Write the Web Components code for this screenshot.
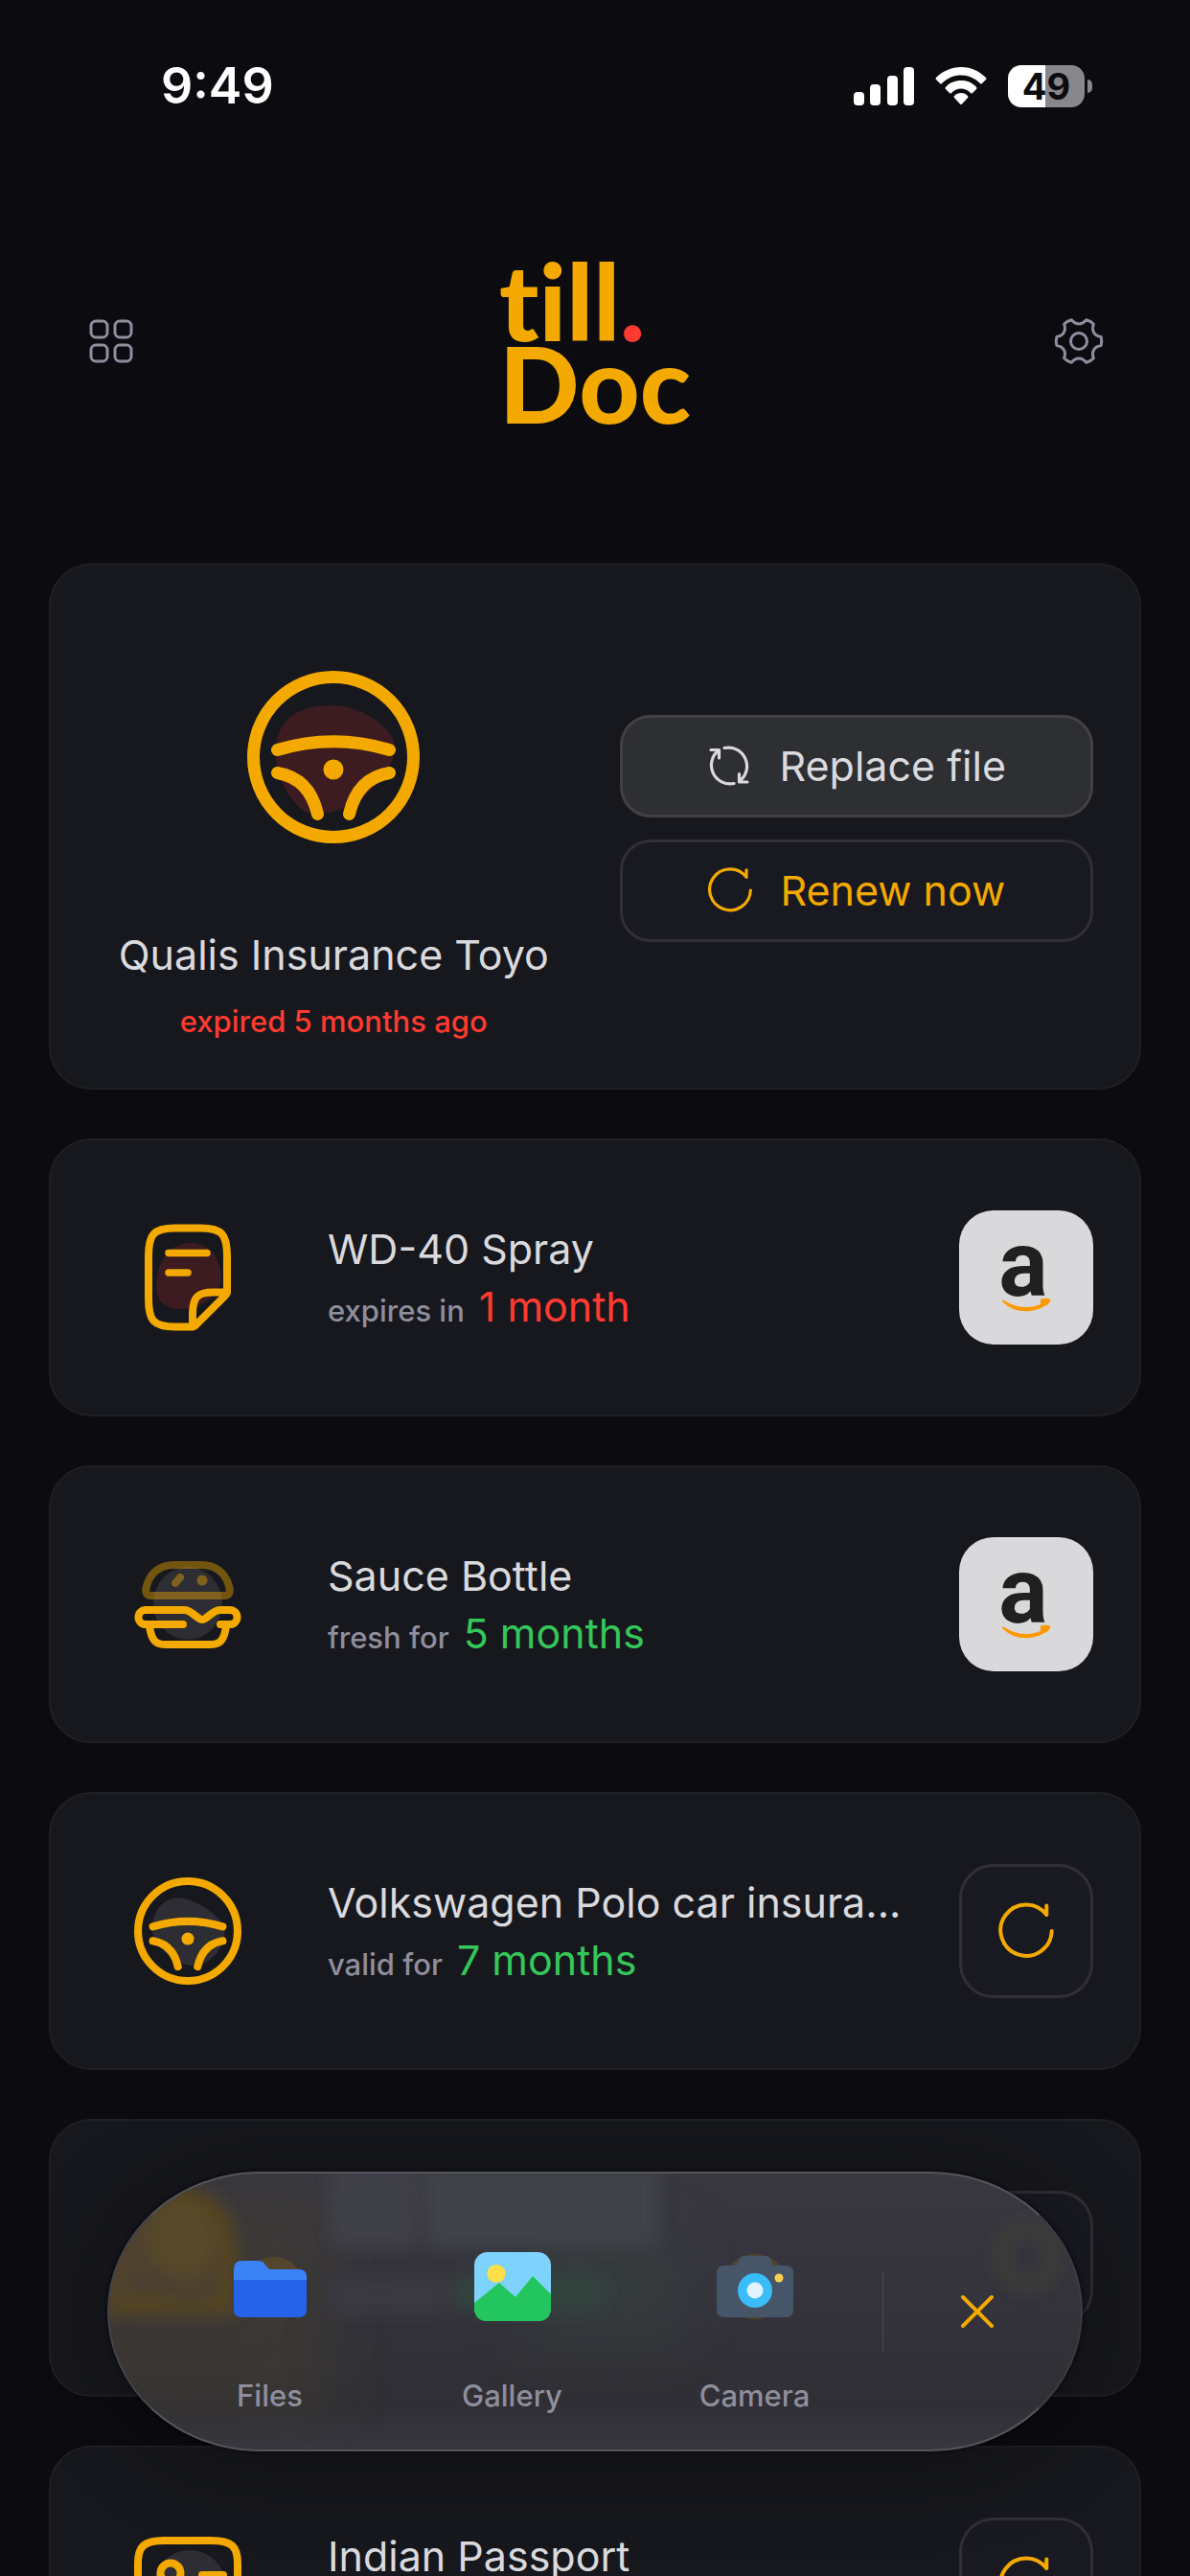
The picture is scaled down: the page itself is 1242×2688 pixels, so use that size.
<!DOCTYPE html>
<html lang="en">
<head>
<meta charset="utf-8">
<meta name="viewport" content="width=device-width, initial-scale=1">
<title>till.Doc</title>
<style>
  :root {
    --bg: #0c0b10;
    --card: #17181d;
    --card-line: #1f2025;
    --amber: #f3a900;
    --red: #ff3a30;
    --green: #34c759;
    --text: #dadade;
    --muted: #8f8e9d;
  }
  body {
    margin: 0;
    background: var(--bg);
    color: var(--text);
    font-family: Inter, "Liberation Sans", sans-serif;
  }
</style>
</head>
<body>

<till-screen>
  <status-bar slot="status" time="9:49" battery="49"></status-bar>
  <app-header slot="header"></app-header>

  <feature-card heading="Qualis Insurance Toyo" note="expired 5 months ago">
    <doc-icon slot="icon" name="wheel" tone="red" size="180"></doc-icon>
    <pill-button slot="actions" icon="replace" filled>Replace file</pill-button>
    <pill-button slot="actions" icon="renew">Renew now</pill-button>
  </feature-card>

  <doc-card heading="WD-40 Spray" label="expires in" value="1 month" tone="red" action="shop">
    <doc-icon slot="icon" name="note" tone="red"></doc-icon>
  </doc-card>
  <doc-card heading="Sauce Bottle" label="fresh for" value="5 months" action="shop">
    <doc-icon slot="icon" name="burger"></doc-icon>
  </doc-card>
  <doc-card heading="Volkswagen Polo car insura..." label="valid for" value="7 months" action="renew">
    <doc-icon slot="icon" name="wheel"></doc-icon>
  </doc-card>
  <doc-card action="renew"></doc-card>
  <doc-card heading="Indian Passport" action="renew">
    <doc-icon slot="icon" name="passport"></doc-icon>
  </doc-card>

  <add-dock slot="dock">
    <dock-item icon="files">Files</dock-item>
    <dock-item icon="gallery">Gallery</dock-item>
    <dock-item icon="camera">Camera</dock-item>
  </add-dock>
</till-screen>

<script>
(function() {

  // six lobes round the hub, flat on top, with a soft valley between them
  function cog(outer, inner) {
    const at = (r, deg) => {
      const a = deg * Math.PI / 180;
      return (r * Math.cos(a)).toFixed(1) + ' ' + (r * Math.sin(a)).toFixed(1);
    };
    let d = 'M' + at(outer, -11);
    for (let deg = 0; deg < 360; deg += 60) {
      d += `Q${ at(outer + 1, deg) } ${ at(outer, deg + 11) }`;
      d += `C${ at(inner, deg + 19) } ${ at(inner, deg + 41) } ${ at(outer, deg + 49) }`;
    }
    return d + 'Z';
  }

  const BLOBS = {
    wheelred: 'M-60-10C-58-40-35-54-3-54C30-54 64-30 64-10C64 10 42 33 28 45C12 58-22 62-32 55C-50 42-62 12-60-10Z',
    wheel: 'M-60-8C-58-35-40-56-16-56C18-54 62-20 62 0C62 28 38 58 8 58C-22 58-62 22-60-8Z'
  };

  const ICONS = {
    wheel: tone => `
      <svg viewBox="-90 -90 180 180" stroke-width="13">
        <path class="blob" d="${ BLOBS['wheel' + tone] || BLOBS.wheel }"/>
        <circle r="83.5"/>
        <path d="M-58.5-7.5Q0-25 58.5-7.5M-58.5 16.5Q-25 22-16.5 59.5M58.5 16.5Q25 22 16.5 59.5"/>
        <circle class="dot" cy="13" r="10.5"/>
      </svg>`,
    note: () => `
      <svg viewBox="-56 -56 112 112" stroke-width="8">
        <path class="blob" d="M-33 8C-32-18-18-36 3-36C24-36 35-18 35 2C34 20 12 33-8 33C-26 32-33 24-33 8Z"/>
        <path d="M5 51.5H-13C-36 51.5-41 45-41 22V-22C-41-45-36-51.5-13-51.5H13C36-51.5 41-45 41-22V14Q41 17 38 20L10 48Q7 51.5 5 51.5V38C5 20 11 15.500 26 15.500H41"/>
        <path d="M-20-25.500H20M-20-5H0" stroke-width="7.500"/>
      </svg>`,
    burger: () => `
      <svg viewBox="-56 -56 112 112" stroke-width="8">
        <ellipse class="blob" cy="-1" rx="36" ry="38"/>
        <g opacity=".42">
          <path d="M-38-9H38Q45-9 43.500-17C40-32 30-41 14-41H-14C-30-41-40-32-43.500-17Q-45-9-38-9Z"/>
          <path d="M-13-22L-8-28"/>
          <circle class="dot" cx="15" cy="-25" r="5.500"/>
        </g>
        <path d="M-5 21H-44A7.500 7.500 0 0 1-44 6H-4Q0 6 4 9L12 15Q15 17 18 15L26 9Q30 6 34 6H44A7.500 7.500 0 0 1 44 21H34M-40 23C-38 37-34 42-24 42H24C34 42 38 37 40 23"/>
      </svg>`,
    passport: () => `
      <svg viewBox="-56 -56 112 112" stroke-width="8">
        <circle class="blob" cx="2" cy="2" r="38"/>
        <path d="M-24-46H24C46-46 52-40 52-22V22C52 40 46 46 24 46H-24C-46 46-52 40-52 22V-22C-52-40-46-46-24-46Z"/>
        <circle cx="-18" cy="-12" r="10.500"/>
        <path d="M15-10H37M-36 26C-34 10-2 10 0 26M15 10H37"/>
      </svg>`,
    renew: () => `
      <svg viewBox="-30 -30 60 60" stroke-width="4">
        <path d="M26.700 0A26.700 26.700 0 1 1 21.300-17V-26.500"/>
      </svg>`,
    replace: () => `
      <svg viewBox="0 0 48 48" stroke-width="3.200">
        <path d="M19 5.500A19.500 19.500 0 0 1 35 40M43 41H34.500V32.500M29 42.500A19.500 19.500 0 0 1 13 8M5 7.500H13.500V16"/>
      </svg>`,
    grid: () => `
      <svg viewBox="-28 -28 56 56" stroke-width="3">
        <rect x="-21" y="-21" width="17" height="17" rx="5"/>
        <rect x="4" y="-21" width="17" height="17" rx="5"/>
        <rect x="-21" y="4" width="17" height="17" rx="5"/>
        <rect x="4" y="4" width="17" height="17" rx="5"/>
      </svg>`,
    gear: () => `
      <svg viewBox="-28 -28 56 56" stroke-width="3">
        <path d="${ cog(23.5, 17) }"/>
        <circle r="8.500"/>
      </svg>`,
    close: () => `
      <svg viewBox="-28 -28 56 56" stroke-width="4">
        <path d="M-15-15L15 15M15-15L-15 15"/>
      </svg>`,
    files: () => `
      <svg viewBox="0 0 88 80" stroke="none">
        <circle cx="48" cy="40" r="31" fill="#54452f"/>
        <path fill="#3b82f6" d="M6 22Q6 13 15 13H31Q35 13 37 15L43 22H74Q82 22 82 30V50H6Z"/>
        <path fill="#2563eb" d="M6 33H82V64Q82 72 74 72H14Q6 72 6 64Z"/>
      </svg>`,
    gallery: () => `
      <svg viewBox="0 0 88 80" stroke="none">
        <rect x="4" y="4" width="80" height="72" rx="14" fill="#7dd3fc"/>
        <circle cx="27" cy="26.500" r="9.500" fill="#fde047"/>
        <path fill="#22c55e" d="M4 57L30 36L47 51L65 29L84 48V62Q84 76 70 76H18Q4 76 4 62Z"/>
      </svg>`,
    camera: () => `
      <svg viewBox="0 0 88 80" stroke="none">
        <circle cx="44" cy="40" r="34" fill="#51432f"/>
        <path fill="#475569" d="M4 26Q4 18 12 18H25L29 10Q30 8 33 8H55Q58 8 59 10L63 18H76Q84 18 84 26V64Q84 72 76 72H12Q4 72 4 64Z"/>
        <circle cx="44" cy="44" r="18" fill="#38bdf8"/>
        <circle cx="44" cy="44" r="8.500" fill="#e0f2fe"/>
        <circle cx="69" cy="31" r="4.500" fill="#fcd34d"/>
      </svg>`,
    amazon: () => `
      <svg viewBox="0 0 140 140" stroke="none">
        <text x="67" y="89" text-anchor="middle" font-family="Roboto, sans-serif" font-weight="700" font-size="96" fill="#221f1f">a</text>
        <path fill="#ff9900" d="M46 93C58 102 73 103 85 98V92.500Q92 91 95.500 93Q95 97 91 99C78 107 59 109 45 95Z"/>
      </svg>`
  };

  class Base extends HTMLElement {
    constructor() {
      super();
      this.attachShadow({ mode: 'open' });
    }
    connectedCallback() {
      this.shadowRoot.innerHTML = `
        <style>
          *, :host { box-sizing: border-box; }
          svg { display: block; overflow: visible; fill: none; stroke-linecap: round; stroke-linejoin: round; }
          button { margin: 0; padding: 0; border: 0; background: none; color: inherit; font: inherit; }
          ${ this.styles() }
        </style>
        ${ this.markup() }`;
    }
    attr(name) {
      return this.getAttribute(name) || '';
    }
  }

  customElements.define('till-screen', class extends Base {
    styles() {
      return `
        :host { display: block; position: relative; height: 100vh; overflow: hidden; }
        main { display: flex; flex-direction: column; gap: 51px; padding: 0 51px; }
      `;
    }
    markup() {
      return `
        <slot name="status"></slot>
        <slot name="header"></slot>
        <main><slot></slot></main>
        <slot name="dock"></slot>`;
    }
  });

  customElements.define('status-bar', class extends Base {
    styles() {
      return `
        :host {
          display: flex;
          justify-content: space-between;
          align-items: center;
          padding: 62px 102px 0 168px;
          height: 118px;
          color: #fff;
        }
        time { font-size: 52px; font-weight: 600; line-height: 56px; }
        .signs { display: flex; align-items: center; gap: 22px; }
        .signs svg { fill: #fff; }
        .battery { display: flex; align-items: center; gap: 3px; }
        .level {
          width: 80px;
          border-radius: 14px;
          background: linear-gradient(90deg, #fff 49%, #88878b 49%);
          color: var(--bg);
          font-size: 38px;
          font-weight: 700;
          line-height: 44px;
          text-align: center;
        }
        .nub { width: 5px; height: 14px; border-radius: 0 5px 5px 0; background: #88878b; }
      `;
    }
    markup() {
      return `
        <time>${ this.attr('time') }</time>
        <div class="signs">
          <svg width="63" height="40" viewBox="0 0 63 40">
            <rect y="26" width="11" height="14" rx="4"/>
            <rect x="17" y="18" width="11" height="22" rx="4"/>
            <rect x="35" y="9" width="11" height="31" rx="4"/>
            <rect x="52" width="11" height="40" rx="4"/>
          </svg>
          <svg width="54" height="40" viewBox="0 0 54 40">
            <path d="M27 0C37 0 46 4 53 11Q54 12 53 13L49 17Q48 18 47 17C41 11 34 8.500 27 8.500S13 11 7 17Q6 18 5 17L1 13Q0 12 1 11C8 4 17 0 27 0Z"/>
            <path d="M27 14C33 14 39 16 43 21Q44 22 43 23L39 27Q38 28 37 27C34 24 31 22.500 27 22.500S20 24 17 27Q16 28 15 27L11 23Q10 22 11 21C15 16 21 14 27 14Z"/>
            <path d="M27 27C30 27 32 28 34 30Q35 31 34 32L28 38.500Q27 39.500 26 38.500L20 32Q19 31 20 30C22 28 24 27 27 27Z"/>
          </svg>
          <div class="battery">
            <span class="level">${ this.attr('battery') }</span>
            <span class="nub"></span>
          </div>
        </div>`;
    }
  });

  customElements.define('app-header', class extends Base {
    styles() {
      return `
        :host {
          display: flex;
          justify-content: space-between;
          align-items: center;
          padding: 152px 88px 146px;
        }
        svg { width: 56px; height: 56px; stroke: var(--muted); }
        h1 {
          margin: 0;
          color: var(--amber);
          font: 900 110px/86px Lato, sans-serif;
          font-variant-ligatures: none;
        }
        h1 span { display: block; }
        h1 i { font-style: normal; color: var(--red); }
      `;
    }
    markup() {
      return `
        <button aria-label="Categories">${ ICONS.grid() }</button>
        <h1><span>till<i>.</i></span><span>Doc</span></h1>
        <button aria-label="Settings">${ ICONS.gear() }</button>`;
    }
  });

  customElements.define('doc-icon', class extends Base {
    styles() {
      const size = this.attr('size') || 112;
      const blob = this.attr('tone') === 'red' ? '#3c1c20' : '#2d2d33';
      return `
        :host { display: block; width: ${ size }px; height: ${ size }px; }
        svg { width: 100%; height: 100%; stroke: var(--amber); }
        .blob { fill: ${ blob }; stroke: none; }
        .dot { fill: var(--amber); stroke: none; }
      `;
    }
    markup() {
      return ICONS[this.attr('name')](this.attr('tone'));
    }
  });

  customElements.define('pill-button', class extends Base {
    styles() {
      return `
        :host { display: block; color: var(--amber); }
        :host([filled]) { color: var(--text); }
        button {
          display: flex;
          justify-content: center;
          align-items: center;
          gap: 28px;
          width: 100%;
          height: 107px;
          border: 3px solid #302f37;
          border-radius: 32px;
          background: #191922;
          font-size: 43px;
        }
        :host([filled]) button { border-color: #414146; background: #2e2f33; }
        svg { width: 48px; height: 48px; stroke: currentColor; }
      `;
    }
    markup() {
      return `<button>${ ICONS[this.attr('icon')]() }<slot></slot></button>`;
    }
  });

  const CARD = `
    border: 2px solid var(--card-line);
    border-radius: 44px;
    background: var(--card);
  `;

  customElements.define('feature-card', class extends Base {
    styles() {
      return `
        :host {
          display: grid;
          grid-template-columns: 1fr 1fr;
          gap: 51px;
          align-items: center;
          padding: 48px 48px 45px;
          ${ CARD }
        }
        .doc { display: flex; flex-direction: column; align-items: center; }
        .art { padding: 62px 0; }
        h2 { margin: 24px 0 0; font-size: 43px; font-weight: 400; line-height: 60px; white-space: nowrap; }
        p { margin: 16px 0 0; color: var(--red); font-size: 31px; font-weight: 500; line-height: 48px; }
        .actions { display: flex; flex-direction: column; gap: 23px; }
      `;
    }
    markup() {
      return `
        <div class="doc">
          <div class="art"><slot name="icon"></slot></div>
          <h2>${ this.attr('heading') }</h2>
          <p>${ this.attr('note') }</p>
        </div>
        <div class="actions"><slot name="actions"></slot></div>`;
    }
  });

  customElements.define('doc-card', class extends Base {
    styles() {
      return `
        :host {
          display: grid;
          grid-template-columns: 188px 1fr 140px;
          gap: 52px;
          align-items: center;
          padding: 73px 48px 73px 49px;
          ${ CARD }
        }
        .art { display: flex; justify-content: center; }
        .info { min-width: 0; height: 120px; line-height: 60px; white-space: nowrap; }
        h2 { margin: 0; font-size: 43px; font-weight: 400; line-height: 60px; }
        p { display: flex; align-items: baseline; gap: 15px; margin: 0; }
        .label { color: var(--muted); font-size: 31px; font-weight: 500; }
        .value { color: var(--${ this.attr('tone') || 'green' }); font-size: 43px; }
        button {
          display: grid;
          place-items: center;
          width: 140px;
          height: 140px;
          border-radius: 36px;
        }
        .renew { border: 3px solid #302f37; background: #191922; }
        .renew svg { width: 60px; height: 60px; stroke: var(--amber); }
        .shop { background: #d9d9db; }
        .shop svg { width: 140px; height: 140px; }
      `;
    }
    markup() {
      const heading = this.attr('heading');
      const value = this.attr('value');
      const button = this.attr('action') === 'shop'
        ? `<button class="shop" aria-label="Buy again">${ ICONS.amazon() }</button>`
        : `<button class="renew" aria-label="Renew">${ ICONS.renew() }</button>`;
      return `
        <div class="art"><slot name="icon"></slot></div>
        <div class="info">
          ${ heading && `<h2>${ heading }</h2>` }
          ${ value && `<p><span class="label">${ this.attr('label') }</span><span class="value">${ value }</span></p>` }
        </div>
        ${ button }`;
    }
  });

  customElements.define('add-dock', class extends Base {
    styles() {
      return `
        :host {
          position: absolute;
          left: 112px;
          right: 112px;
          bottom: 130px;
          display: grid;
          grid-template-columns: 1fr 198px;
          padding: 0 9px 0 41px;
          height: 292px;
          overflow: hidden;
          border: 2px solid #55545b;
          border-left-color: #45444a;
          border-right-color: #3c3c41;
          border-radius: 160px / 146px;
          background: linear-gradient(#393841, #34333b 50%, #302f35 84%, #383740);
          box-shadow: 0 0 4px #050507, 0 8px 90px rgba(0, 0, 0, .35);
        }
        /* light that comes through the glass from the card behind */
        .glow { position: absolute; inset: 0; }
        nav {
          position: relative;
          display: grid;
          grid-template-columns: repeat(3, 1fr);
          padding: 78px 7px 0 0;
        }
        .close {
          position: relative;
          display: grid;
          place-items: center;
        }
        .close::before {
          content: '';
          position: absolute;
          left: 0;
          top: 102px;
          bottom: 102px;
          width: 1px;
          background: #4c4b4d;
        }
        .close svg { width: 56px; height: 56px; stroke: var(--amber); }
      `;
    }
    markup() {
      return `
        <svg class="glow" width="1014" height="288">
          <filter id="far" x="-50%" y="-50%" width="200%" height="200%"><feGaussianBlur stdDeviation="28"/></filter>
          <filter id="near" x="-50%" y="-50%" width="200%" height="200%"><feGaussianBlur stdDeviation="8"/></filter>
          <rect x="-40" y="20" width="270" height="230" fill="#403a33" opacity=".6" filter="url(#far)"/>
          <rect x="430" y="60" width="170" height="120" fill="#35443f" opacity=".4" filter="url(#far)"/>
          <g filter="url(#near)">
            <path d="M-10 150V90Q-10 14 66 14Q134 14 134 84V150Z" fill="#50432d"/>
            <path d="M10 138H118Q130 90 118 54Q106 24 66 24" stroke="#55451f" stroke-width="14"/>
            <ellipse cx="76" cy="68" rx="34" ry="38" fill="#58482b"/>
            <path d="M24 116Q50 104 66 122T112 118" stroke="#453d36" stroke-width="8"/>
            <rect x="230" y="-10" width="92" height="86" rx="14" fill="#404048"/>
            <rect x="330" y="-10" width="244" height="86" rx="14" fill="#404349"/>
            <rect x="228" y="110" width="126" height="34" rx="14" fill="#3a3942"/>
            <rect x="358" y="104" width="160" height="40" rx="16" fill="#33433e"/>
            <ellipse cx="958" cy="86" rx="28" ry="30" stroke="#413c34" stroke-width="12"/>
          </g>
        </svg>
        <nav><slot></slot></nav>
        <button class="close" aria-label="Close">${ ICONS.close() }</button>`;
    }
  });

  customElements.define('dock-item', class extends Base {
    styles() {
      return `
        :host { display: block; color: var(--muted); }
        button {
          display: flex;
          flex-direction: column;
          align-items: center;
          gap: 55px;
          width: 100%;
          font-size: 31px;
          font-weight: 500;
          line-height: 38px;
        }
        svg { width: 88px; height: 80px; }
      `;
    }
    markup() {
      return `<button>${ ICONS[this.attr('icon')]() }<slot></slot></button>`;
    }
  });

}());
</script>
</body>
</html>
